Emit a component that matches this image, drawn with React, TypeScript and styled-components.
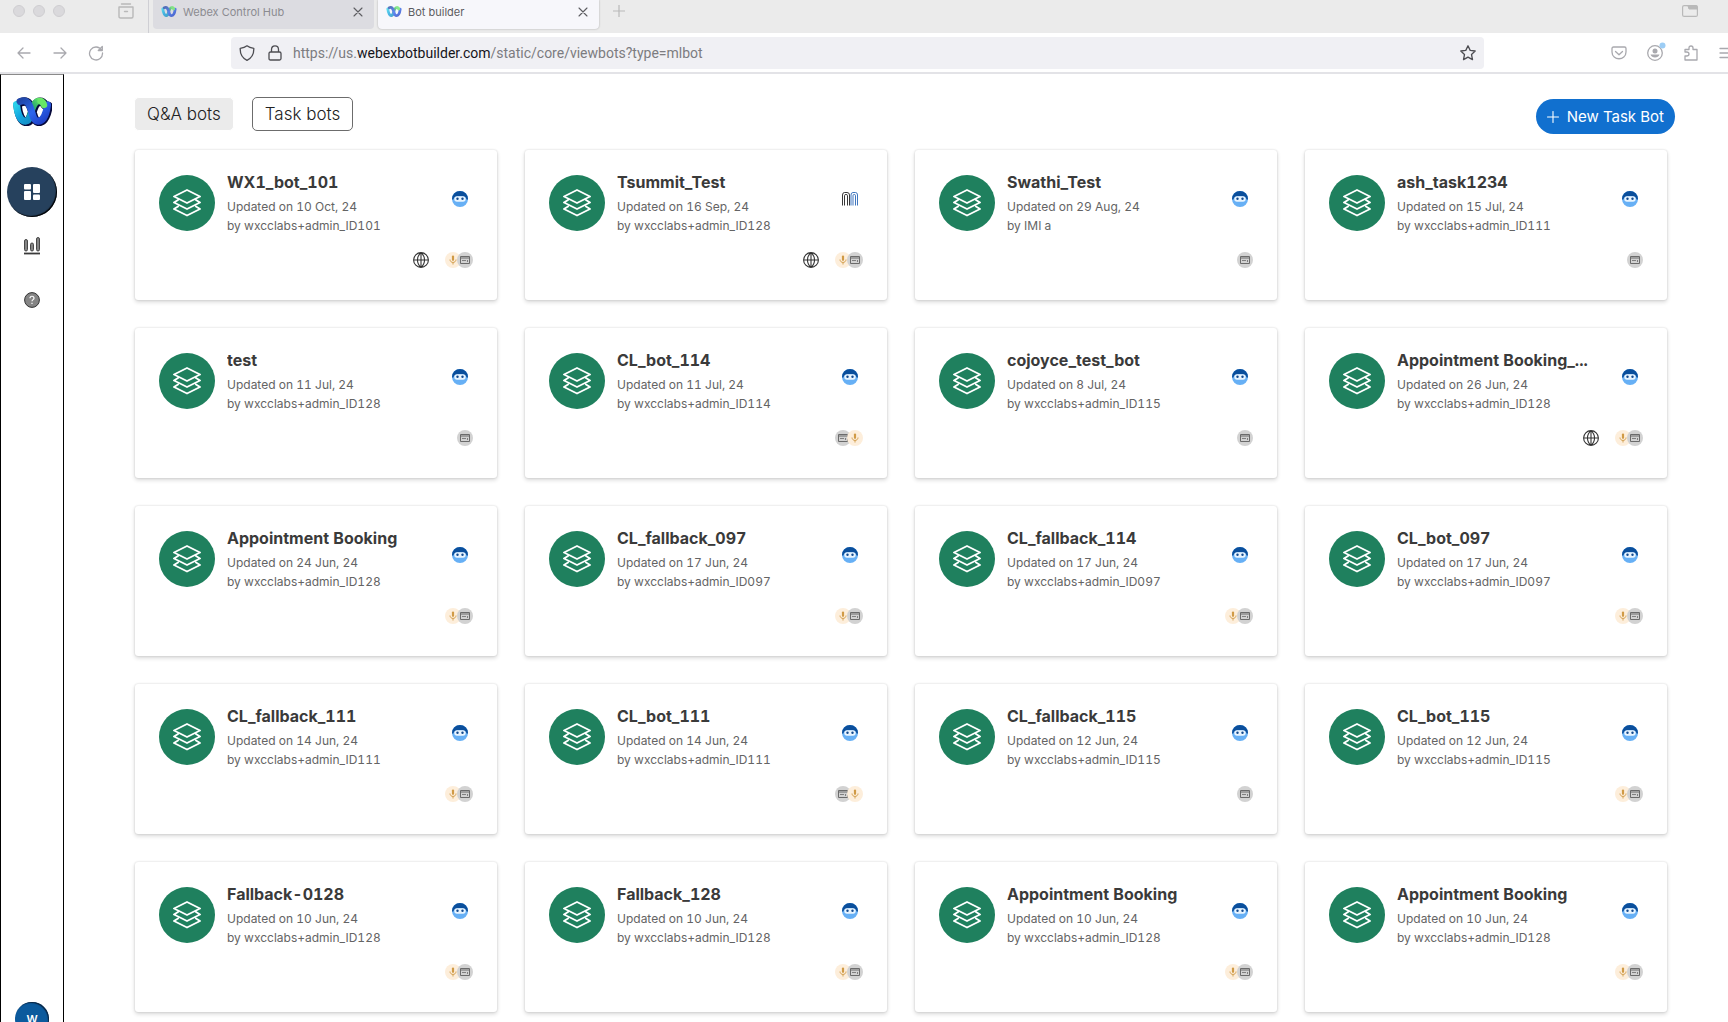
import React from "react";
import styled, { createGlobalStyle } from "styled-components";

const Global = createGlobalStyle`
  *, *::before, *::after { box-sizing: border-box; }
  html, body { margin: 0; background: #fff; }
  body, button, input { font-family: Inter, "Liberation Sans", sans-serif; }
  button { border: 0; padding: 0; background: none; color: inherit; cursor: pointer; }
  svg { display: block; flex: none; }
`;

const Window = styled.div`
  display: flex;
  flex-direction: column;
  height: 100vh;
  overflow: hidden;
`;

/* ---------- browser chrome ---------- */
const TabStrip = styled.header`
  display: flex;
  flex: none;
  align-items: flex-start;
  height: 33px;
  padding-right: 18px;
  background: #ebebeb;
`;
const WindowControls = styled.div`
  display: flex;
  align-items: center;
  gap: 8px;
  height: 22px;
  padding-left: 13px;
`;
const Light = styled.span`
  width: 12px;
  height: 12px;
  border: 1px solid #cfced1;
  border-radius: 50%;
  background: #dad9dc;
`;
const StripButton = styled.button`
  display: grid;
  place-items: center;
  width: 40px;
  height: 22px;
  color: #b9b9b9;
`;
const Archive = styled.div`
  display: flex;
  justify-content: flex-end;
  width: 84px;
  height: 33px;
  padding-right: 2px;
  border-right: 1px solid #cfcfd4;
`;
const TabList = styled.nav`
  display: flex;
  gap: 4px;
  padding-left: 4px;
`;
const Tab = styled.div<{ $active?: boolean }>`
  display: flex;
  align-items: center;
  gap: 6px;
  width: 221px;
  height: 29px;
  padding: 0 8px 6px;
  border-radius: 0 0 4px 4px;
  background: ${(p) => (p.$active ? "#f7f7fb" : "#dcdce1")};
  box-shadow: ${(p) => (p.$active ? "0 0 2px rgba(0, 0, 0, 0.3)" : "none")};
  color: ${(p) => (p.$active ? "#5b5b60" : "#8b8b90")};
`;
const Favicon = styled.span`
  opacity: 0.75;
`;
const TabTitle = styled.a`
  flex: 1;
  color: inherit;
  font-size: 11px;
  line-height: 16px;
  text-decoration: none;
`;
const TabClose = styled.button`
  display: grid;
  place-items: center;
  width: 16px;
  height: 16px;
  color: #5d5d61;
`;
const Spacer = styled.div`
  flex: 1;
`;

const Toolbar = styled.div`
  display: flex;
  flex: none;
  align-items: center;
  height: 41px;
  padding: 1px 0 0 6px;
  border-bottom: 2px solid #e3e3e7;
`;
const NavButton = styled.button`
  display: grid;
  flex: none;
  place-items: center;
  width: 36px;
  height: 32px;
  color: #a9a9ae;
`;
const AddressBar = styled.div`
  display: flex;
  flex: 1;
  align-items: center;
  height: 32px;
  margin: 0 117px;
  padding: 0 8px;
  border-radius: 4px;
  background: #f0f0f4;
  color: #4d4d52;
`;
const Address = styled.a`
  flex: 1;
  padding-left: 10px;
  color: #7c7c80;
  font-family: Roboto, "Liberation Sans", sans-serif;
  font-size: 14px;
  line-height: 20px;
  text-decoration: none;
  b { color: #15141a; font-weight: 400; }
`;
const Site = styled.div`
  display: flex;
  gap: 12px;
`;
const Tools = styled.div`
  display: flex;
  width: 127px;
  overflow: hidden;
`;

/* ---------- application ---------- */
const Shell = styled.div`
  display: flex;
  flex: 1;
  min-height: 0;
`;
const Sidebar = styled.aside`
  display: flex;
  flex: none;
  flex-direction: column;
  align-items: center;
  width: 64px;
  padding-top: 21px;
  border: 1px solid #000;
  border-top-color: #8a8a8a;
  border-bottom: 0;
  overflow: hidden;
`;
const SideNav = styled.nav`
  display: flex;
  flex-direction: column;
  align-items: center;
  gap: 4px;
  padding-top: 41px;
`;
const SideButton = styled.button<{ $active?: boolean }>`
  display: grid;
  place-items: center;
  width: 50px;
  height: 50px;
  border-radius: 50%;
  background: ${(p) => (p.$active ? "#26415d" : "transparent")};
  box-shadow: ${(p) => (p.$active ? "inset -1px -1px 1px #000" : "none")};
  color: ${(p) => (p.$active ? "#fff" : "#858585")};
`;
const Avatar = styled.button`
  flex: none;
  width: 34px;
  height: 34px;
  margin: auto 0 -14px;
  border-radius: 50%;
  background: #0b5a9d;
  box-shadow: inset -1px 1px 1px #0a2440;
  color: #fff;
  font-size: 11px;
  font-weight: 600;
  line-height: 8px;
`;
const Main = styled.main`
  flex: 1;
  min-width: 0;
  padding: 23px 53px 0 70px;
`;
const Actions = styled.div`
  display: flex;
  height: 37px;
`;
const Filter = styled.button<{ $outlined?: boolean }>`
  height: 34px;
  padding: 0 12px;
  margin-right: 18px;
  border: 1px solid ${(p) => (p.$outlined ? "#6c6c6c" : "#fff")};
  border-radius: 5px;
  background: ${(p) => (p.$outlined ? "#fff" : "#ebebeb")};
  color: #222;
  font-size: 17px;
  font-weight: 300;
`;
const NewBot = styled.button`
  display: flex;
  align-items: center;
  align-self: flex-end;
  gap: 8px;
  height: 35px;
  padding: 0 11px;
  margin-left: auto;
  border-radius: 18px;
  background: #1170cf;
  color: #fff;
  font-size: 15px;
`;
const Grid = styled.section`
  display: grid;
  grid-template-columns: repeat(4, minmax(0, 1fr));
  gap: 28px;
  padding: 16px 8px 0 1px;
`;
const Card = styled.article`
  display: flex;
  flex-direction: column;
  justify-content: space-between;
  height: 150px;
  padding: 22px 24px 32px;
  border-radius: 3px;
  background: #fff;
  box-shadow: 0 0 2px rgba(0, 0, 0, 0.16), 0 2px 4px rgba(0, 0, 0, 0.16);
`;
const CardHead = styled.div`
  display: flex;
  gap: 12px;
`;
const Badge = styled.span`
  display: grid;
  flex: none;
  place-items: center;
  width: 56px;
  height: 56px;
  margin-top: 3px;
  border-radius: 50%;
  background: #1f805e;
  color: #fff;
`;
const Info = styled.div`
  flex: 1;
  min-width: 0;
  font-variant-numeric: tabular-nums;
`;
const Title = styled.h2`
  margin: 0 0 5px;
  overflow: hidden;
  color: #3a3a3a;
  font-size: 16px;
  font-weight: 700;
  line-height: 20px;
  text-overflow: ellipsis;
  white-space: nowrap;
`;
const Meta = styled.p`
  margin: 0;
  color: #646464;
  font-size: 12px;
  line-height: 19px;
  white-space: nowrap;
`;
const Engine = styled.span`
  display: grid;
  flex: none;
  place-items: center;
  width: 16px;
  height: 16px;
  margin: 19px 5px 0 14px;
`;
const CardFoot = styled.div`
  display: flex;
  align-items: center;
  justify-content: flex-end;
  height: 16px;
  color: #333;
`;
const Channels = styled.div`
  display: flex;
  margin-left: 16px;
`;
const Channel = styled.span<{ $kind: "m" | "w" }>`
  display: grid;
  place-items: center;
  width: 16px;
  height: 16px;
  border-radius: 50%;
  background: ${(p) => (p.$kind === "m" ? "#fdeedb" : "#d2d2d2")};
  & + & { margin-left: -4px; }
`;

type IconProps = { d: string; size?: number; w?: number; box?: number };
const Icon = ({ d, size = 16, w = 1.4, box = 16 }: IconProps) => (
  <svg width={size} height={size} viewBox={`0 0 ${box} ${box}`} fill="none" stroke="currentColor" strokeWidth={w} strokeLinecap="round" strokeLinejoin="round" aria-hidden>
    <path d={d} />
  </svg>
);

const CYAN = "M4.500 8.500C5.500 17 8 25.200 13.500 25.200C16 25.200 17.500 23 18.500 20";
const BLUE = "M8 5.500C16.500 2 18 11 20 17C21.500 22.500 23 25.200 26 25.200C31.500 25.200 34.500 17 35.500 9";
const GREEN = "M13.500 25C19.500 25 19 5 27 5C29.500 5 31 6.500 32 8.500";

const WebexMark = ({ id, width, height, dark }: { id: string; width: number; height: number; dark?: boolean }) => (
  <svg width={width} height={height} viewBox="0 0 40 30" fill="none" strokeLinecap="round" aria-hidden>
    <defs>
      <linearGradient id={`${id}a`} x1="0" y1="0" x2="0.9" y2="1">
        <stop offset="0" stopColor="#2ad0ea" /><stop offset="0.5" stopColor="#12a5e0" /><stop offset="1" stopColor="#1590c8" />
      </linearGradient>
      <linearGradient id={`${id}b`} x1="0" y1="0" x2="1" y2="1">
        <stop offset="0" stopColor="#2147a8" /><stop offset="0.5" stopColor="#2c66ee" /><stop offset="1" stopColor="#1c3cc4" />
      </linearGradient>
      <linearGradient id={`${id}c`} x1="0" y1="1" x2="1" y2="0">
        <stop offset="0" stopColor="#157a8c" /><stop offset="0.6" stopColor="#2fae6b" /><stop offset="1" stopColor="#6ff06a" />
      </linearGradient>
    </defs>
    {dark && <path d={CYAN + BLUE + GREEN} transform="translate(1 .8)" stroke="#05083a" strokeWidth="8.400" />}
    <path d={GREEN} stroke={`url(#${id}c)`} strokeWidth="6.600" />
    <path d={CYAN} stroke={`url(#${id}a)`} strokeWidth="7" />
    <path d={BLUE} stroke={`url(#${id}b)`} strokeWidth="7" />
    <path d="M28.500 5C30.500 5.500 31.500 7 32 9" stroke="#66e766" strokeWidth="6.400" />
  </svg>
);

const BotFace = () => (
  <svg width="16" height="16" viewBox="0 0 16 16" aria-hidden>
    <circle cx="8" cy="8" r="8" fill="#67b0f5" />
    <path d="M0 8A8 8 0 0 1 16 8L15 9C14 5.500 11 5.200 8 5.200S2 5.500 1 9Z" fill="#0b4f9c" />
    <rect x="2.300" y="5.300" width="11.400" height="5.400" rx="2.700" fill="#e9f5ff" />
    <circle cx="5.500" cy="7.800" r="1.200" fill="#124a8f" />
    <circle cx="10.500" cy="7.800" r="1.200" fill="#124a8f" />
  </svg>
);
const ArchMark = () => (
  <svg width="16" height="14" viewBox="0 0 16 14" fill="none" strokeWidth=".9" aria-hidden>
    <path d="M.5 13.500V3Q.5.5 2.500.5H5Q7.500.5 7.500 3V13.500M2.500 13.500V3.500Q2.500 2.500 4 2.500T5.500 3.500V13.500" stroke="#222" />
    <path d="M9 13.500V3Q9 .5 11 .5H13.500Q15.500.5 15.500 3V13.500M11 13.500V3.500Q11 2.500 12.250 2.500T13.500 3.500V13.500" stroke="#2a68b8" />
  </svg>
);
const Layers = () => (
  <Icon size={28} box={28} w={1.9} d="M14 1L27 7.500L14 14L1 7.500ZM5 11L1 13.500L14 20L27 13.500L23 11M5 17.500L1 20L14 26.500L27 20L23 17.500" />
);
const Globe = () => (
  <Icon w={1.1} d="M8 .6A7.400 7.400 0 1 1 8 15.400A7.400 7.400 0 1 1 8 .6ZM8 .6C3.300 4.500 3.300 11.500 8 15.400C12.700 11.500 12.700 4.500 8 .6ZM8 .6V15.400M.6 8H15.400" />
);
const Mic = () => (
  <svg width="8" height="10" viewBox="0 0 8 10" fill="none" stroke="#d09a45" aria-hidden>
    <path d="M4 1.500V4.800" strokeWidth="2.200" strokeLinecap="round" />
    <path d="M1 4.500C1 8.400 7 8.400 7 4.500M4 7.500V9.500" strokeWidth=".9" />
  </svg>
);
const Web = () => (
  <svg width="10" height="8" viewBox="0 0 10 8" fill="none" stroke="#6b6b6b" aria-hidden>
    <path d="M.5 .5H9.500V7.500H.5ZM.5 2H9.500" />
    <path d="M2 4.500H6M7.500 4V6" strokeWidth=".8" />
  </svg>
);

type Bot = [name: string, date: string, by: string, channels: string, live?: boolean, arch?: boolean];
const A = "wxcclabs+admin_ID";
const bots: Bot[] = [
  ["WX1_bot_101", "10 Oct, 24", A + "101", "mw", true],
  ["Tsummit_Test", "16 Sep, 24", A + "128", "mw", true, true],
  ["Swathi_Test", "29 Aug, 24", "IMI a", "w"],
  ["ash_task1234", "15 Jul, 24", A + "111", "w"],
  ["test", "11 Jul, 24", A + "128", "w"],
  ["CL_bot_114", "11 Jul, 24", A + "114", "wm"],
  ["cojoyce_test_bot", "8 Jul, 24", A + "115", "w"],
  ["Appointment Booking_...", "26 Jun, 24", A + "128", "mw", true],
  ["Appointment Booking", "24 Jun, 24", A + "128", "mw"],
  ["CL_fallback_097", "17 Jun, 24", A + "097", "mw"],
  ["CL_fallback_114", "17 Jun, 24", A + "097", "mw"],
  ["CL_bot_097", "17 Jun, 24", A + "097", "mw"],
  ["CL_fallback_111", "14 Jun, 24", A + "111", "mw"],
  ["CL_bot_111", "14 Jun, 24", A + "111", "wm"],
  ["CL_fallback_115", "12 Jun, 24", A + "115", "w"],
  ["CL_bot_115", "12 Jun, 24", A + "115", "mw"],
  ["Fallback-0128", "10 Jun, 24", A + "128", "mw"],
  ["Fallback_128", "10 Jun, 24", A + "128", "mw"],
  ["Appointment Booking", "10 Jun, 24", A + "128", "mw"],
  ["Appointment Booking", "10 Jun, 24", A + "128", "mw"],
];

const BotCard = ({ bot: [name, date, by, channels, live, arch] }: { bot: Bot }) => (
  <Card>
    <CardHead>
      <Badge><Layers /></Badge>
      <Info>
        <Title>{name}</Title>
        <Meta>Updated on {date}</Meta>
        <Meta>by {by}</Meta>
      </Info>
      <Engine>{arch ? <ArchMark /> : <BotFace />}</Engine>
    </CardHead>
    <CardFoot>
      {live && <Globe />}
      <Channels>
        {channels.split("").map((c) => (
          <Channel key={c} $kind={c as "m" | "w"}>{c === "m" ? <Mic /> : <Web />}</Channel>
        ))}
      </Channels>
    </CardFoot>
  </Card>
);

const CROSS = "M1 1L9 9M9 1L1 9";

export default function App() {
  return (
    <Window>
      <Global />
      <TabStrip>
        <WindowControls><Light /><Light /><Light /></WindowControls>
        <Archive>
          <StripButton aria-label="Recent tabs"><Icon d="M3.500 1H12.500M1 4H15V13.500Q15 15 13.500 15H2.500Q1 15 1 13.500ZM6.500 8.500H9.500" /></StripButton>
        </Archive>
        <TabList>
          <Tab>
            <Favicon><WebexMark id="t1" width={16} height={13} /></Favicon>
            <TabTitle href="#hub">Webex Control Hub</TabTitle>
            <TabClose aria-label="Close Webex Control Hub"><Icon d={CROSS} size={10} box={10} w={1.1} /></TabClose>
          </Tab>
          <Tab $active>
            <Favicon><WebexMark id="t2" width={16} height={13} /></Favicon>
            <TabTitle href="#bots">Bot builder</TabTitle>
            <TabClose aria-label="Close Bot builder"><Icon d={CROSS} size={10} box={10} w={1.1} /></TabClose>
          </Tab>
        </TabList>
        <StripButton aria-label="New tab"><Icon d="M6 0V12M0 6H12" size={12} box={12} w={1.2} /></StripButton>
        <Spacer />
        <StripButton aria-label="List all tabs">
          <svg width="16" height="12" viewBox="0 0 16 12" fill="none" stroke="currentColor" aria-hidden>
            <rect x=".6" y=".6" width="14.800" height="10.800" rx="1.500" strokeWidth="1.200" />
            <path d="M6 1H15V4H7Z" fill="currentColor" />
          </svg>
        </StripButton>
      </TabStrip>
      <Toolbar>
        <NavButton aria-label="Back"><Icon d="M14 8H2M7 3L2 8L7 13" w={1.3} /></NavButton>
        <NavButton aria-label="Forward"><Icon d="M2 8H14M9 3L14 8L9 13" w={1.3} /></NavButton>
        <NavButton aria-label="Reload"><Icon d="M13.500 5A6.500 6.500 0 1 0 14.500 8M14.300 1.500V5.500H10.300Z" w={1.3} /></NavButton>
        <AddressBar>
          <Site>
            <Icon d="M8 .8C10 2.500 12 3 14.800 3.300C15 8.500 13 13 8 15.300C3 13 1 8.500 1.200 3.300C4 3 6 2.500 8 .8Z" w={1.3} />
            <Icon d="M3.500 7H12.500Q14 7 14 8.500V13.500Q14 15 12.500 15H3.500Q2 15 2 13.500V8.500Q2 7 3.500 7ZM4.500 7V4.500C4.500-.3 11.500-.3 11.500 4.500V7" w={1.3} />
          </Site>
          <Address href="#address">https://us.<b>webexbotbuilder.com</b>/static/core/viewbots?type=mlbot</Address>
          <Icon d="M8 .8L10.200 5.400L15.200 6L11.500 9.500L12.500 14.600L8 12.100L3.500 14.600L4.500 9.500L.8 6L5.800 5.400Z" w={1.3} />
        </AddressBar>
        <Tools>
          <NavButton aria-label="Save to Pocket"><Icon d="M2.500 2H13.500Q15 2 15 3.500V7C15 16 1 16 1 7V3.500Q1 2 2.500 2ZM4.500 6.500L8 9.800L11.500 6.500" w={1.3} /></NavButton>
          <NavButton aria-label="Account">
            <svg width="18" height="18" viewBox="0 0 18 18" overflow="visible" aria-hidden>
              <circle cx="9" cy="9" r="7.300" fill="none" stroke="currentColor" strokeWidth="1.300" />
              <circle cx="9" cy="7" r="2.500" fill="currentColor" />
              <path d="M4.500 10.500H13.500C12.500 14.500 5.500 14.500 4.500 10.500Z" fill="currentColor" />
              <circle cx="16.500" cy="1.500" r="3" fill="#9ccdf5" />
            </svg>
          </NavButton>
          <NavButton aria-label="Extensions"><Icon d="M2 15V11H3.500Q6 11 6 9T3.500 7H2V4.500H6V3Q6 1 8 1T10 3V4.500H14V15Z" w={1.3} /></NavButton>
          <NavButton aria-label="Menu"><Icon d="M1 3.500H15M1 8H15M1 12.500H15" w={1.3} /></NavButton>
        </Tools>
      </Toolbar>
      <Shell>
        <Sidebar>
          <WebexMark id="side" width={40} height={30} dark />
          <SideNav>
            <SideButton $active aria-label="Dashboard">
              <svg width="16" height="16" viewBox="0 0 16 16" fill="currentColor" aria-hidden>
                <rect width="7" height="5.500" rx="1" /><rect y="7" width="7" height="9" rx="1" />
                <rect x="9" width="7" height="9" rx="1" /><rect x="9" y="10.500" width="7" height="5.500" rx="1" />
              </svg>
            </SideButton>
            <SideButton aria-label="Reports">
              <svg width="16" height="18" viewBox="0 0 16 18" fill="currentColor" stroke="#3a3a3a" strokeWidth=".9" aria-hidden>
                <rect x=".5" y="2.500" width="3" height="11.500" rx="1.500" /><rect x="6.500" y="6" width="3" height="8" rx="1.500" />
                <rect x="12.500" y=".5" width="3" height="13.500" rx="1.500" /><path d="M0 16.500H16" strokeWidth="1.800" />
              </svg>
            </SideButton>
            <SideButton aria-label="Help">
              <svg width="16" height="16" viewBox="0 0 16 16" fill="none" aria-hidden>
                <circle cx="8" cy="8" r="7.400" fill="#858585" stroke="#333" />
                <path d="M6 6.200C6 3.600 10 3.600 10 6.200C10 7.700 8 7.600 8 9.300M8 10.800V12" stroke="#fff" strokeWidth="1.200" />
              </svg>
            </SideButton>
          </SideNav>
          <Avatar>W</Avatar>
        </Sidebar>
        <Main>
          <Actions>
            <Filter>Q&amp;A bots</Filter>
            <Filter $outlined>Task bots</Filter>
            <NewBot><Icon d="M6 .5V11.500M.5 6H11.500" size={12} box={12} w={1.1} />New Task Bot</NewBot>
          </Actions>
          <Grid>
            {bots.map((bot, i) => <BotCard key={i} bot={bot} />)}
          </Grid>
        </Main>
      </Shell>
    </Window>
  );
}
